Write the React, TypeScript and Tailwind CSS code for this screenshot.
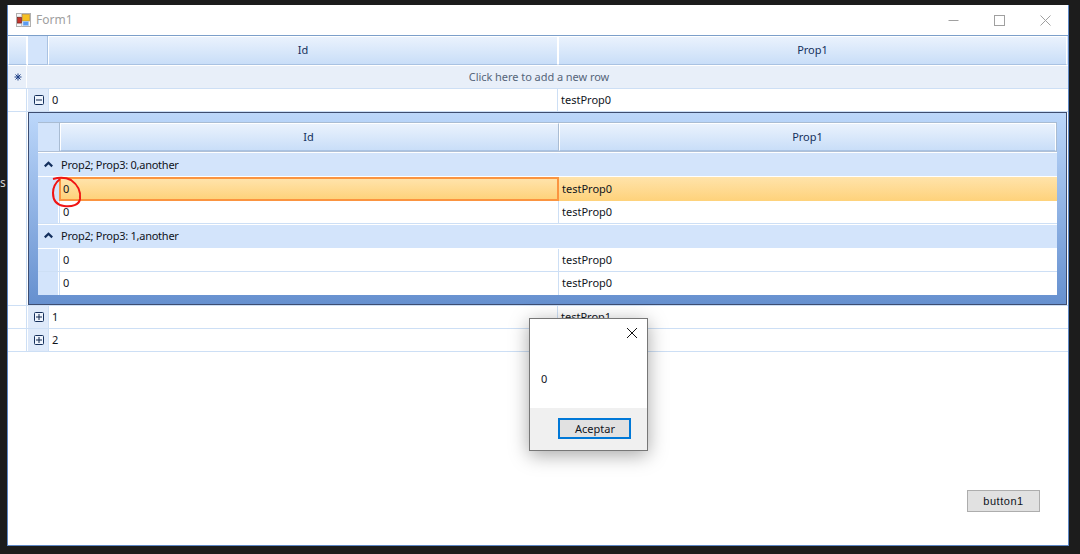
import React from "react";

const FONT = "font-['Noto_Sans',sans-serif]";
const CELL = "flex items-center text-[11px] text-[#10141c] whitespace-nowrap overflow-hidden";

function BoxIcon({ plus }: { plus?: boolean }) {
  return (
    <svg width="10" height="10" viewBox="0 0 10 10" className="block">
      <rect x="0.5" y="0.5" width="9" height="9" rx="1" fill="#eef4fd" stroke="#16305c" />
      <path d={plus ? "M2 5H8M5 2V8" : "M2 5H8"} stroke="#10264c" strokeWidth="1" />
    </svg>
  );
}

function Chevron() {
  return (
    <svg width="9" height="7" viewBox="0 0 9 7" className="block">
      <path d="M0.8 5.4L4.5 1.7L8.2 5.4" fill="none" stroke="#14305e" strokeWidth="2.2" />
    </svg>
  );
}

function StarIcon() {
  return (
    <svg width="8" height="8" viewBox="0 0 8 8" className="block">
      <path d="M4 0.5V7.5M0.5 4H7.5M1.5 1.5L6.5 6.5M6.5 1.5L1.5 6.5" stroke="#1d3f86" strokeWidth="1" />
    </svg>
  );
}

function FormIcon() {
  return (
    <svg width="15" height="14" viewBox="0 0 15 14" className="block">
      <rect x="0.5" y="0.5" width="14" height="13" fill="#f6f6f6" stroke="#b0b0b0" />
      <path d="M5.5 0.5V4M0.5 4H5.5M5.5 10V13.5M0.5 10H5.5" stroke="#c4c4c4" fill="none" />
      <rect x="6.5" y="1.5" width="7" height="6.5" fill="#f5c022" stroke="#c0902a" strokeWidth="0.7" />
      <rect x="1.5" y="4.5" width="4" height="5.5" fill="#c8322a" stroke="#7a2018" strokeWidth="0.7" />
      <rect x="7" y="8.5" width="5.5" height="4" fill="#5c9cf0" stroke="#a9c8ef" strokeWidth="0.7" />
    </svg>
  );
}

function HeaderCell({ className = "", children }: { className?: string; children?: React.ReactNode }) {
  return (
    <div
      className={`flex items-center justify-center border border-white border-b-[#a9c2e2] bg-gradient-to-b from-[#eaf2fd] to-[#c9def8] text-[11px] text-[#14305c] ${className}`}
    >
      {children}
    </div>
  );
}

function Row({ text, prop, plus }: { text: string; prop: string; plus?: boolean }) {
  return (
    <div className="flex h-[23px] border-b border-[#cddff5]">
      <div className="w-[19px] border-r border-[#cddff5]" />
      <div className="w-[21px] ml-px pl-px bg-[#dfeafa] flex items-center justify-center border-r border-[#cddff5]">
        <BoxIcon plus={plus} />
      </div>
      <div className={`${CELL} w-[509px] pl-[3px] border-r border-[#cddff5]`}>{text}</div>
      <div className={`${CELL} flex-1 pl-[3px]`}>{prop}</div>
    </div>
  );
}

function InnerRow({ last }: { last?: boolean }) {
  return (
    <div className={`flex h-[23px] ${last ? "" : "border-b border-[#cddff5]"}`}>
      <div className="w-[20px] bg-[#d3e4fb] mr-px" />
      <div className={`${CELL} w-[500px] pl-[3px] bg-white border-l border-r border-[#cddff5]`}>0</div>
      <div className={`${CELL} flex-1 pl-[3px] bg-white`}>testProp0</div>
    </div>
  );
}

function GroupRow({ label, up }: { label: string; up?: boolean }) {
  return (
    <div className={`flex h-[24px] border-b border-white bg-[#d3e4fb] ${up ? "pb-[2px]" : ""}`}>
      <div className="w-[21px] flex items-center justify-center">
        <Chevron />
      </div>
      <div className="text-[11px] text-[#10141c] flex items-center pl-[2px] tracking-[-0.25px] pt-px">{label}</div>
    </div>
  );
}

function InnerGrid() {
  return (
    <div className="flex-1 flex flex-col bg-white h-[173px]">
      <div className="flex h-[30px] border-b border-[#b0c0d6] border-t border-t-[#a9bcd3] border-r border-r-[#a9bcd3]">
        <div className="w-[22px] bg-[#d3e4fb] border-r border-[#a9bcd3]" />
        <HeaderCell className="w-[499px] border-r-[#a9bcd3] pr-[2px]">Id</HeaderCell>
        <HeaderCell className="flex-1">Prop1</HeaderCell>
      </div>
      <div className="h-px bg-white" />
      <GroupRow label="Prop2; Prop3: 0,another" />
      <div className="flex h-[24px]">
        <div className="w-[21px] bg-[#d3e4fb]" />
        <div className={`${CELL} w-[500px] pl-[2px] border-2 border-[#fb9440] bg-gradient-to-b from-[#ffe3aa] to-[#fed27a]`}>0</div>
        <div className={`${CELL} flex-1 pl-[3px] bg-gradient-to-b from-[#ffe3aa] to-[#fed27a]`}>testProp0</div>
      </div>
      <InnerRow />
      <div className="h-px bg-white" />
      <GroupRow label="Prop2; Prop3: 1,another" up />
      <InnerRow />
      <InnerRow last />
    </div>
  );
}

function Grid() {
  return (
    <div className="border-t border-[#7c9fca]">
      <div className="flex h-[29px] bg-[#d3e4fb]">
        <HeaderCell className="w-[19px]" />
        <div className="w-[1px] bg-white" />
        <div className="w-[20px] bg-[#d3e4fb] border-r border-[#a9c2e2] border-b border-b-[#a9c2e2]" />
        <HeaderCell className="w-[510px]">Id</HeaderCell>
        <HeaderCell className="flex-1 mr-[1px]">Prop1</HeaderCell>
      </div>
      <div className="flex h-[24px] bg-[#e8eff9] border-t border-white border-b border-b-[#cddff5]">
        <div className="w-[19px] pl-px border-r border-white flex items-center justify-center">
          <StarIcon />
        </div>
        <div className="flex-1 flex items-center justify-center text-[11px] text-[#56657a] mr-[17px] tracking-[-0.05px]">Click here to add a new row</div>
      </div>
      <Row text="0" prop="testProp0" />
      <div className="flex h-[194px] border-b border-[#cddff5]">
        <div className="w-[19px] border-r border-[#cddff5] mr-px" />
        <div className="w-[1039px] h-[193px] border border-[#3e4d70] bg-gradient-to-b from-[#bcd7fa] to-[#6690cf] p-[9px] flex">
          <InnerGrid />
        </div>
      </div>
      <Row text="1" prop="testProp1" plus />
      <Row text="2" prop="" plus />
    </div>
  );
}

export default function App() {
  return (
    <div className={`relative w-[1080px] h-[554px] bg-[#1c1c1c] overflow-hidden pt-[5px] pl-[7px] ${FONT}`}>
      <div className="absolute left-0 top-[174px] text-[12px] text-[#d0d0d0]">s</div>
      <div className="w-[1062px] h-[541px] bg-white border-l border-r border-b border-[#5d87c4] flex flex-col">
        <div className="h-[30px] flex items-center pl-[8px]">
          <FormIcon />
          <span className="ml-[5px] text-[12px] text-[#a0a0a0]">Form1</span>
          <div className="ml-auto flex items-center gap-[35px] pr-[17px]">
            <svg width="11" height="11" viewBox="0 0 11 11"><path d="M0.5 5.5H10.5" stroke="#a0a0a0" /></svg>
            <svg width="11" height="11" viewBox="0 0 11 11"><rect x="0.5" y="0.5" width="10" height="10" fill="none" stroke="#a0a0a0" /></svg>
            <svg width="11" height="11" viewBox="0 0 11 11"><path d="M0.5 0.5L10.5 10.5M10.5 0.5L0.5 10.5" stroke="#a0a0a0" /></svg>
          </div>
        </div>
        <Grid />
        <div className="flex-1 flex justify-end items-end pr-[28px] pb-[33px]">
          <div className="w-[73px] h-[22px] bg-[#e1e1e1] border border-[#adadad] flex items-center justify-center text-[11px] text-[#10141c] font-['Liberation_Sans',sans-serif] tracking-[0.55px]">
            button1
          </div>
        </div>
      </div>

      <svg className="absolute left-[48px] top-[172px]" width="38" height="38" viewBox="48 172 38 38">
        <path d="M53 179C60 177 67 178 71 180C78 185 81 192 80 199C79 205 72 207 64 206C56 205 53 200 53 193C53 187 55 183 60 179" fill="none" stroke="#f01414" strokeWidth="2" />
      </svg>

      <div className="absolute left-[529px] top-[318px] w-[119px] h-[133px] bg-white border border-[#777777] shadow-[0_4px_18px_rgba(0,0,0,0.35)] flex flex-col">
        <div className="h-[89px] relative flex items-end pl-[11px] pb-[21px]">
          <svg className="absolute right-[9px] top-[8px]" width="12" height="12" viewBox="0 0 12 12"><path d="M1 1L11 11M11 1L1 11" stroke="#111" /></svg>
          <span className="text-[11px] text-[#10141c]">0</span>
        </div>
        <div className="flex-1 bg-[#f0f0f0] flex justify-end pt-[10px] pr-[16px]">
          <div className="w-[73px] h-[21px] border-2 border-[#0078d7] bg-[#e1e1e1] flex items-center justify-center text-[11px] text-[#10141c] pt-[2px] pl-px">
            Aceptar
          </div>
        </div>
      </div>
    </div>
  );
}
